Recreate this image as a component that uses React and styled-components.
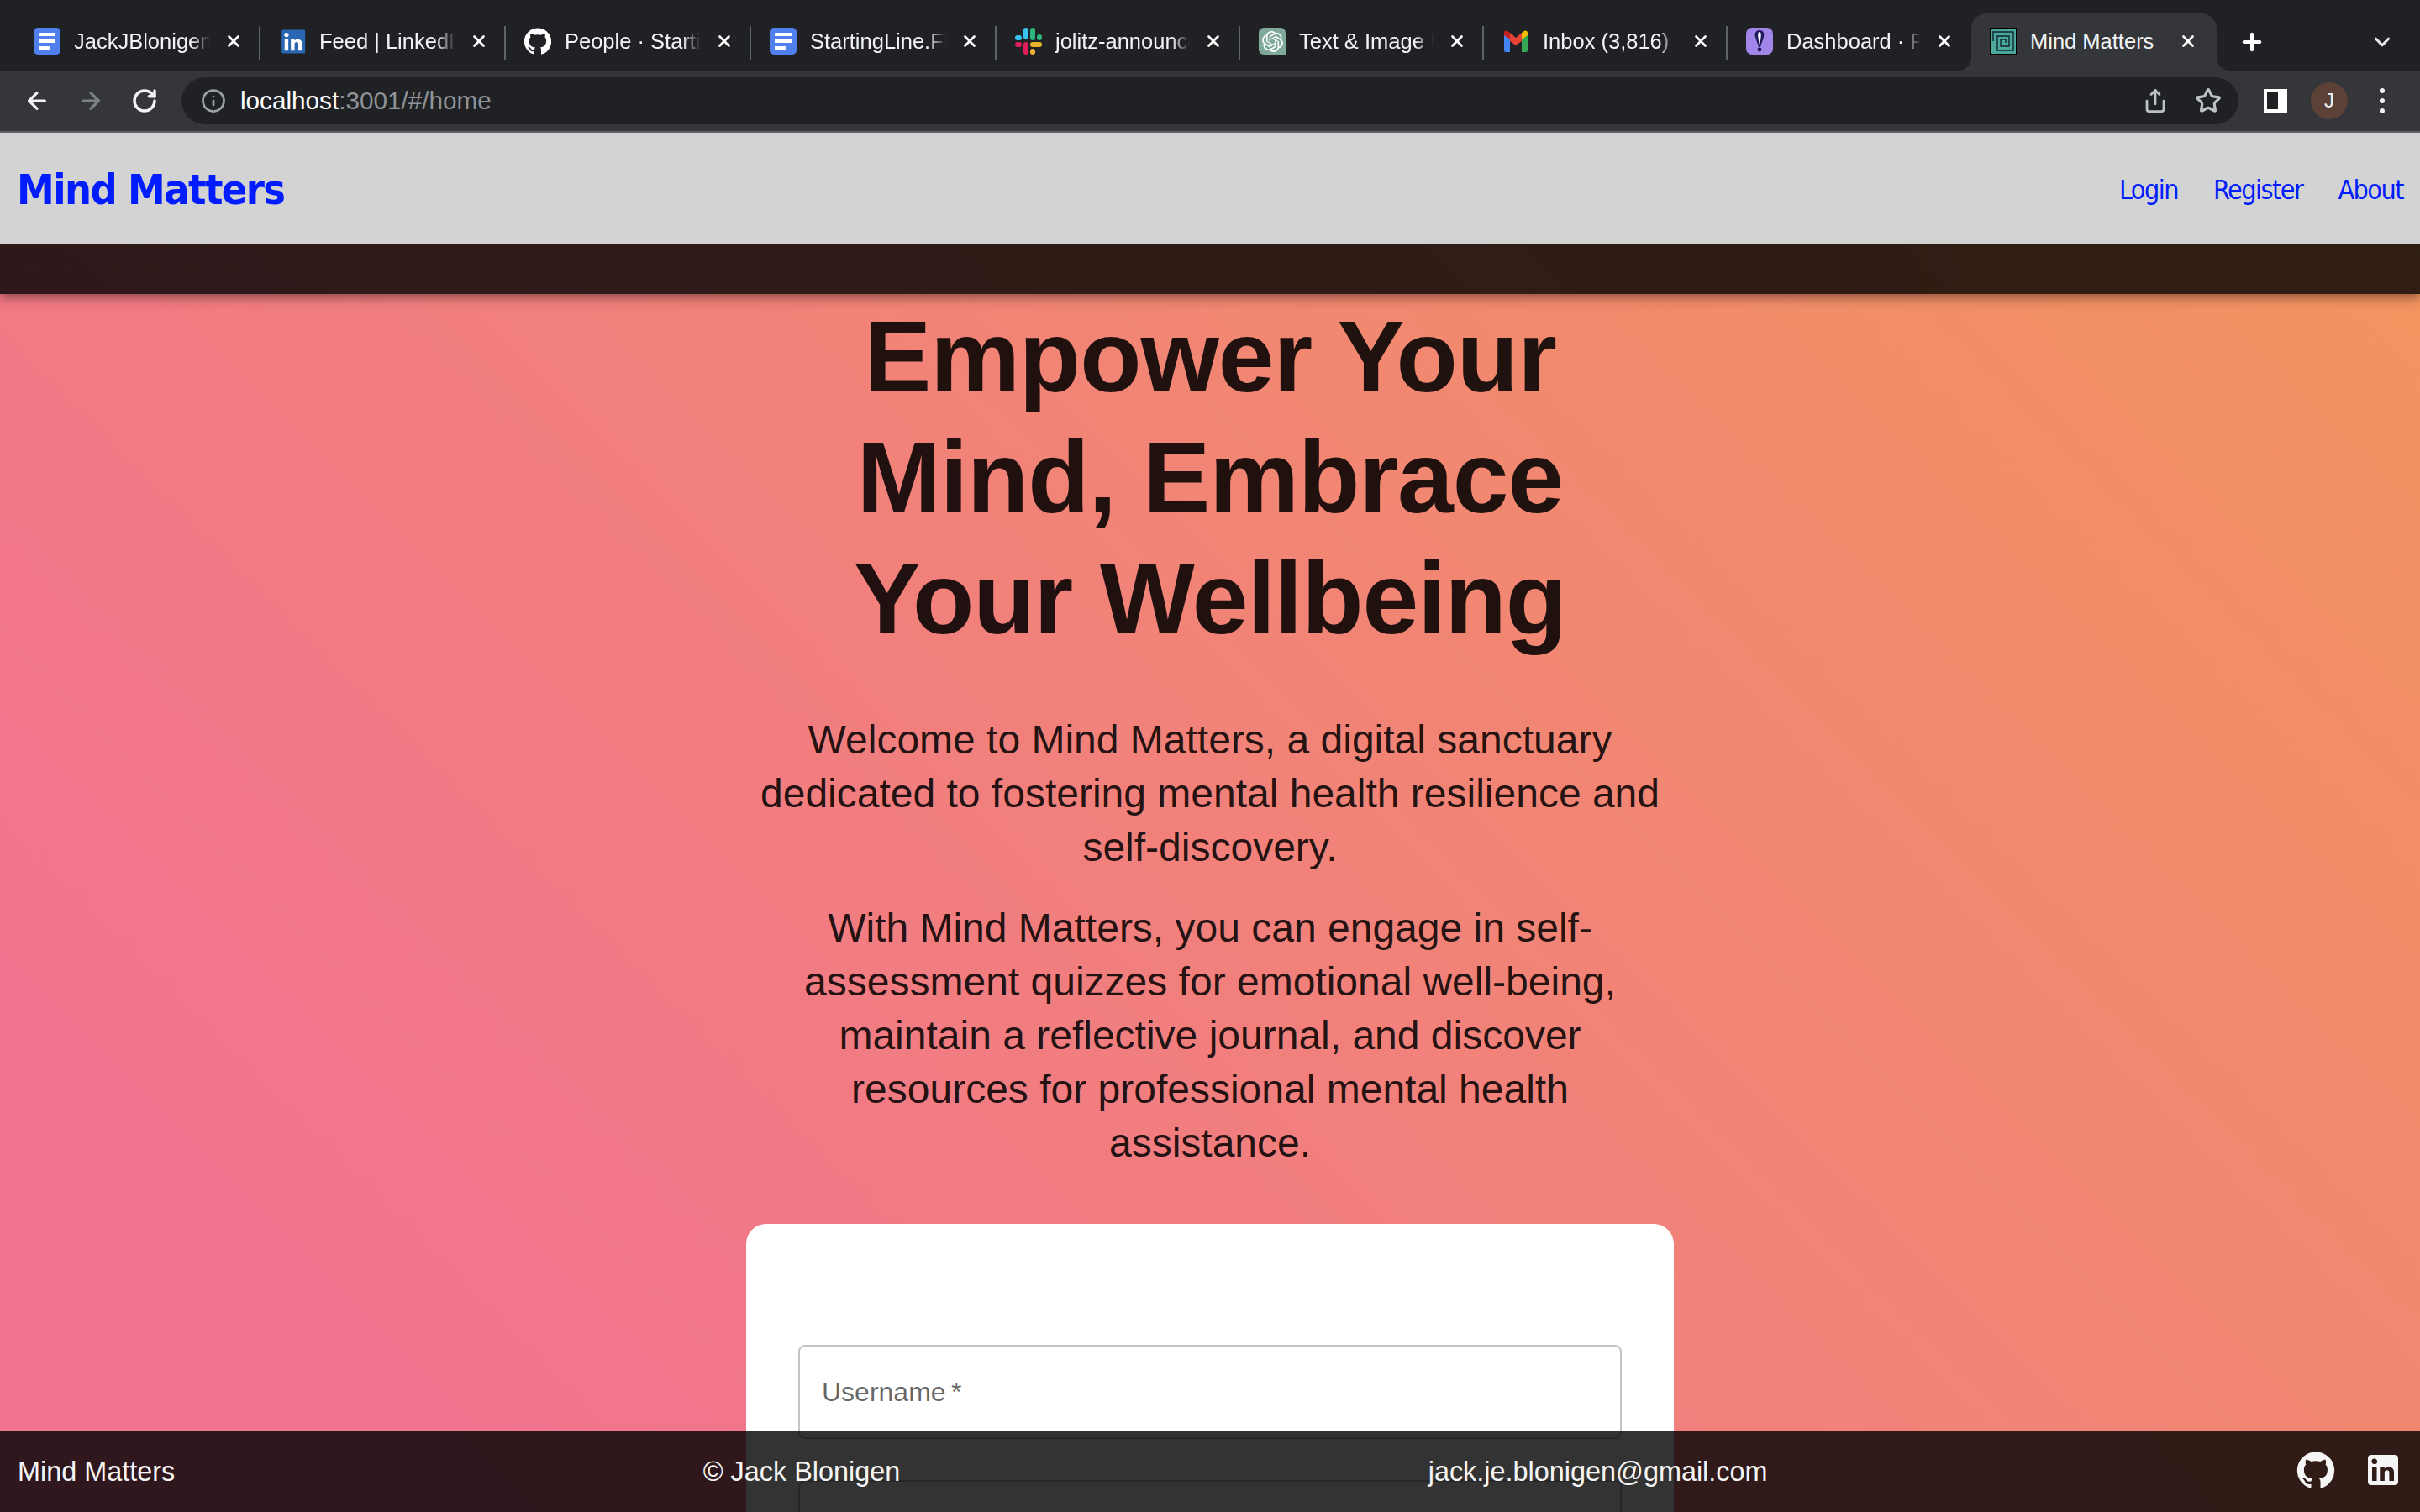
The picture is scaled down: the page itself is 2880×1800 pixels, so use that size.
import React from "react";
import styled, { createGlobalStyle } from "styled-components";
import { ArrowLeft, ArrowRight, RotateCw, Info, Share, Star, X, Plus, ChevronDown } from "lucide-react";
import { SiOpenai } from "react-icons/si";

const GITHUB_PATH =
  "M12 1.27a11 11 0 00-3.48 21.46c.55.09.73-.28.73-.55v-1.84c-3.03.64-3.67-1.46-3.67-1.46-.55-1.29-1.28-1.65-1.28-1.65-.92-.65.1-.65.1-.65 1.1 0 1.73 1.1 1.73 1.1.92 1.65 2.57 1.2 3.21.92a2 2 0 01.64-1.47c-2.47-.27-5.04-1.19-5.04-5.5 0-1.1.46-2.1 1.2-2.84a3.76 3.76 0 010-2.93s.91-.28 3.11 1.1c1.8-.49 3.7-.49 5.5 0 2.1-1.38 3.02-1.1 3.02-1.1a3.76 3.76 0 010 2.93c.83.74 1.2 1.74 1.2 2.94 0 4.21-2.57 5.13-5.04 5.4.45.37.82.92.82 2.02v3.03c0 .27.1.64.73.55A11 11 0 0012 1.27";
const LINKEDIN_IN =
  "M18.5 18.5v-5.3a3.26 3.26 0 0 0-3.26-3.26c-.85 0-1.84.52-2.32 1.3v-1.11h-2.79v8.37h2.79v-4.93c0-.77.62-1.4 1.39-1.4a1.4 1.4 0 0 1 1.4 1.4v4.93h2.79M6.88 8.56a1.68 1.68 0 0 0 1.68-1.68c0-.93-.75-1.69-1.68-1.69a1.69 1.69 0 0 0-1.69 1.69c0 .93.76 1.68 1.69 1.68m1.39 9.94v-8.37H5.5v8.37h2.77z";
const LINKEDIN_BOX =
  "M19 3a2 2 0 0 1 2 2v14a2 2 0 0 1-2 2H5a2 2 0 0 1-2-2V5a2 2 0 0 1 2-2h14m-.5 15.5v-5.3a3.26 3.26 0 0 0-3.26-3.26c-.85 0-1.84.52-2.32 1.3v-1.11h-2.79v8.37h2.79v-4.93c0-.77.62-1.4 1.39-1.4a1.4 1.4 0 0 1 1.4 1.4v4.93h2.79M6.88 8.56a1.68 1.68 0 0 0 1.68-1.68c0-.93-.75-1.69-1.68-1.69a1.69 1.69 0 0 0-1.69 1.69c0 .93.76 1.68 1.69 1.68m1.39 9.94v-8.37H5.5v8.37h2.77z";

const DocsIcon = () => (
  <svg width="32" height="32" viewBox="0 0 32 32">
    <rect width="32" height="32" rx="5" fill="#4f80ee" />
    <rect x="6" y="6" width="20" height="4" fill="#fff" />
    <rect x="6" y="14" width="20" height="4" fill="#fff" />
    <rect x="6" y="22" width="13" height="4" fill="#fff" />
  </svg>
);

const LinkedinIcon = () => (
  <svg width="32" height="32" viewBox="3 1 20 20">
    <rect x="5" y="2.5" width="17.5" height="17.5" fill="#2a67b2" rx="1" />
    <path d={LINKEDIN_IN} fill="#fff" transform="translate(1.7 -.5)" />
  </svg>
);

const OctocatIcon = () => (
  <svg width="32" height="32" viewBox="1 1 22 22">
    <path d={GITHUB_PATH} fill="#fff" />
  </svg>
);

const SlackIcon = () => (
  <svg width="32" height="32" viewBox="0 0 32 32">
    <rect x="10" y="0" width="6" height="14" rx="3" fill="#36c5f0" />
    <rect x="0" y="9" width="8" height="6" rx="3" fill="#36c5f0" />
    <rect x="18" y="0" width="6" height="15" rx="3" fill="#2eb67d" />
    <rect x="26" y="8" width="6" height="7" rx="3" fill="#2eb67d" />
    <rect x="10" y="17" width="6" height="15" rx="3" fill="#e01e5a" />
    <rect x="0" y="17" width="8" height="6" rx="3" fill="#e01e5a" />
    <rect x="18" y="17" width="14" height="6" rx="3" fill="#ecb22e" />
    <rect x="18" y="25" width="6" height="7" rx="3" fill="#ecb22e" />
  </svg>
);

const GptTile = styled.span`
  flex: none;
  display: flex;
  align-items: center;
  justify-content: center;
  width: 32px;
  height: 32px;
  border-radius: 6px 6px 0 6px;
  background: #7fa99b;
  color: #fff;
`;

const GmailIcon = () => (
  <svg width="32" height="32" viewBox="0 0 32 32">
    <path d="M2 7l7 5v17H4a2 2 0 0 1-2-2z" fill="#4285f4" />
    <path d="M30 7l-7 5v17h5a2 2 0 0 0 2-2z" fill="#34a853" />
    <path d="M9 6l7 6 7-6v10l-7 5-7-5z" fill="#ea4335" />
    <path d="M23 6l3-2a2.5 2.5 0 0 1 4 2v3l-7 5z" fill="#fbbc04" />
    <path d="M9 6L6 4a2.5 2.5 0 0 0-4 2v3l7 5z" fill="#c5221f" />
  </svg>
);

const FlyIcon = () => (
  <svg width="32" height="32" viewBox="0 0 32 32">
    <rect width="32" height="32" rx="7" fill="#a285e8" />
    <path d="M16 3c5 0 6 4 5 8-1 4-3 8-4 12h-2c-1-4-3-8-4-12-1-4 0-8 5-8z" fill="#1f1a5c" />
    <path d="M16 5c1.6 0 2 3 1.6 6-.3 3-1 7-1.6 10-.6-3-1.3-7-1.6-10-.4-3 0-6 1.6-6z" fill="#fff" />
    <circle cx="16" cy="26" r="2.4" fill="#1f1a5c" />
  </svg>
);

const MindIcon = () => (
  <svg width="32" height="32" viewBox="0 0 32 32">
    <rect width="32" height="32" fill="#000" />
    <rect x="1" y="1" width="30" height="30" fill="#4aa99b" />
    <path
      d="M4 16V5h24v22H9V10h14v12H13v-8h6v4"
      fill="none"
      stroke="#123"
      strokeWidth="1.4"
    />
  </svg>
);

const tabs = [
  { title: "JackJBlonigen Docs", icon: <DocsIcon />, width: 290, divider: true },
  { title: "Feed | LinkedIn", icon: <LinkedinIcon />, width: 290, divider: true },
  { title: "People · Starting", icon: <OctocatIcon />, width: 290, divider: true },
  { title: "StartingLine.FM", icon: <DocsIcon />, width: 290, divider: true },
  { title: "jolitz-announcements", icon: <SlackIcon />, width: 288, divider: true },
  {
    title: "Text & Image Uses",
    icon: (
      <GptTile>
        <SiOpenai size={25} />
      </GptTile>
    ),
    width: 288,
    divider: true,
  },
  { title: "Inbox (3,816) · jack", icon: <GmailIcon />, width: 288, divider: true },
  { title: "Dashboard · Fly", icon: <FlyIcon />, width: 288, divider: false },
];

const GlobalStyle = createGlobalStyle`
  html, body {
    margin: 0;
    padding: 0;
    height: 100%;
    overflow: hidden;
  }
  #root {
    height: 100%;
  }
`;

const Screen = styled.div`
  display: flex;
  flex-direction: column;
  width: 2880px;
  height: 1800px;
  font-family: "Liberation Sans", Arial, sans-serif;
`;

const TabStrip = styled.div`
  flex: none;
  display: flex;
  align-items: flex-end;
  height: 84px;
  padding-left: 18px;
  background: #202124;
`;

const Tab = styled.div`
  position: relative;
  flex: none;
  display: flex;
  align-items: center;
  gap: 16px;
  width: ${(p) => p.$width}px;
  height: 68px;
  padding: 0 ${(p) => (p.$active ? 22 : 18)}px 2px 22px;
  box-sizing: border-box;
  color: #f1f3f4;
  font-size: 25.5px;
  border-radius: 18px 18px 0 0;
  background: ${(p) => (p.$active ? "#35363a" : "transparent")};

  ${(p) =>
    p.$active &&
    `
    &::before, &::after {
      content: "";
      position: absolute;
      bottom: 0;
      width: 16px;
      height: 16px;
    }
    &::before {
      left: -16px;
      background: radial-gradient(circle at 0 0, transparent 16px, #35363a 16.5px);
    }
    &::after {
      right: -16px;
      background: radial-gradient(circle at 100% 0, transparent 16px, #35363a 16.5px);
    }
  `}
`;

const TabDivider = styled.div`
  flex: none;
  align-self: flex-start;
  width: 2px;
  height: 40px;
  margin-top: 31px;
  background: ${(p) => (p.$hidden ? "transparent" : "#5f6368")};
`;

const TabTitle = styled.span`
  flex: 1;
  min-width: 0;
  overflow: hidden;
  white-space: nowrap;
  -webkit-mask-image: ${(p) =>
    p.$active ? "none" : "linear-gradient(to right, #000 86%, transparent 100%)"};
`;

const TabClose = styled.span`
  flex: none;
  display: flex;
  justify-content: center;
  width: 24px;
  color: #fff;
`;

const NewTab = styled.span`
  flex: none;
  display: flex;
  margin: 0 0 18px 26px;
  color: #fff;
`;

const TabMenu = styled.span`
  flex: none;
  display: flex;
  margin: 0 30px 19px auto;
  color: #e8eaed;
`;

const Toolbar = styled.div`
  flex: none;
  display: flex;
  align-items: center;
  height: 72px;
  padding: 0 0 0 28px;
  background: #35363a;
  border-bottom: 2px solid #5f6368;
`;

const NavButton = styled.span`
  flex: none;
  display: flex;
  width: 32px;
  margin-right: 32px;
  color: ${(p) => (p.$disabled ? "#7d8085" : "#f1f3f4")};
`;

const Omnibox = styled.div`
  flex: none;
  display: flex;
  align-items: center;
  gap: 17px;
  width: 2448px;
  height: 56px;
  margin-left: -4px;
  padding: 0 20px 0 23px;
  box-sizing: border-box;
  border-radius: 28px;
  background: #202124;
  color: #9aa0a6;
`;

const Url = styled.span`
  flex: 1;
  font-size: 29.7px;
  color: #8f9398;

  b {
    font-weight: 400;
    color: #fff;
  }
`;

const OmniAction = styled.span`
  display: flex;
  margin-left: 15px;
  color: #bdc1c6;
`;

const SidePanel = styled.span`
  flex: none;
  display: flex;
  justify-content: flex-end;
  width: 28px;
  height: 28px;
  margin-left: 30px;
  box-sizing: border-box;
  border: 4px solid #fff;
  border-right-width: 3px;
  background: #202124;

  &::after {
    content: "";
    width: 8px;
    background: #fff;
  }
`;

const Avatar = styled.span`
  flex: none;
  display: flex;
  align-items: center;
  justify-content: center;
  width: 44px;
  height: 44px;
  margin-left: 28px;
  border-radius: 50%;
  background: #5c4137;
  color: #f1f3f4;
  font-size: 24px;
`;

const Kebab = styled.span`
  flex: none;
  display: flex;
  flex-direction: column;
  gap: 6px;
  margin-left: 38px;

  i {
    width: 6px;
    height: 6px;
    border-radius: 50%;
    background: #f1f3f4;
  }
`;

const Viewport = styled.div`
  position: relative;
  flex: 1;
  min-height: 0;
  overflow: hidden;
  background: linear-gradient(45deg, #f1738f 14%, #f2955d 100%);
`;

const Header = styled.header`
  position: relative;
  z-index: 2;
  box-shadow: 0 4px 8px -2px rgba(0, 0, 0, 0.2), 0 8px 10px rgba(0, 0, 0, 0.14),
    0 2px 20px rgba(0, 0, 0, 0.12);
`;

const Navbar = styled.nav`
  display: flex;
  align-items: center;
  justify-content: space-between;
  height: 132px;
  padding: 0 20px;
  background: #d3d3d3;
  font-family: "DejaVu Sans Condensed", "DejaVu Sans", sans-serif;
  color: #001cff;
`;

const Brand = styled.a`
  margin-top: 3px;
  font-size: 50px;
  font-weight: 700;
  letter-spacing: -1.6px;
`;

const NavLinks = styled.div`
  display: flex;
  gap: 42px;
  margin-top: 3px;
  font-size: 32px;
  letter-spacing: -1.5px;
`;

const HeaderBand = styled.div`
  height: 60px;
  background: rgba(0, 0, 0, 0.8);
`;

const Hero = styled.main`
  display: flex;
  flex-direction: column;
  align-items: center;
  width: 1104px;
  margin: 0 auto;
  padding-top: 2px;
  text-align: center;
`;

const Title = styled.h1`
  margin: 0 0 65px;
  font-size: 120px;
  font-weight: 700;
  line-height: 1.2;
  letter-spacing: -0.00833em;
  color: rgba(0, 0, 0, 0.87);
`;

const Lead = styled.p`
  margin: 0 0 32px;
  font-size: 48px;
  line-height: 64px;
  color: rgba(0, 0, 0, 0.87);
`;

const Card = styled.form`
  display: flex;
  flex-direction: column;
  gap: 49px;
  width: 100%;
  margin-top: 32px;
  padding: 144px 62px 64px;
  box-sizing: border-box;
  border-radius: 24px;
  background: #fff;
`;

const Field = styled.div`
  display: flex;
  align-items: center;
  height: 112px;
  padding-left: 26px;
  box-sizing: border-box;
  border: 2px solid #c4c4c4;
  border-radius: 8px;
  font-size: 32px;
  color: rgba(0, 0, 0, 0.6);
`;

const Footer = styled.footer`
  position: absolute;
  left: 0;
  right: 0;
  bottom: 0;
  z-index: 3;
  display: flex;
  align-items: center;
  justify-content: space-between;
  height: 96px;
  padding: 0 20px 0 21px;
  box-sizing: border-box;
  background: rgba(0, 0, 0, 0.8);
  color: #f5f5f5;
  font-size: 32.4px;
`;

const Socials = styled.div`
  display: flex;
  gap: 32px;
  margin-top: -4px;
  color: #f5f5f5;
`;

const App = () => {
  return (
    <Screen>
      <GlobalStyle />
      <TabStrip>
        {tabs.map((tab) => (
          <React.Fragment key={tab.title}>
            <Tab $width={tab.width}>
              {tab.icon}
              <TabTitle>{tab.title}</TabTitle>
              <TabClose>
                <X size={22} strokeWidth={3} />
              </TabClose>
            </Tab>
            <TabDivider $hidden={!tab.divider} />
          </React.Fragment>
        ))}
        <Tab $active $width={292}>
          <MindIcon />
          <TabTitle $active>Mind Matters</TabTitle>
          <TabClose>
            <X size={22} strokeWidth={3} />
          </TabClose>
        </Tab>
        <NewTab>
          <Plus size={32} strokeWidth={3} />
        </NewTab>
        <TabMenu>
          <ChevronDown size={30} strokeWidth={2.5} />
        </TabMenu>
      </TabStrip>

      <Toolbar>
        <NavButton>
          <ArrowLeft size={32} strokeWidth={2.4} />
        </NavButton>
        <NavButton $disabled>
          <ArrowRight size={32} strokeWidth={2.4} />
        </NavButton>
        <NavButton>
          <RotateCw size={32} strokeWidth={2.6} />
        </NavButton>
        <Omnibox>
          <Info size={30} strokeWidth={2.2} />
          <Url>
            <b>localhost</b>:3001/#/home
          </Url>
          <OmniAction>
            <Share size={30} strokeWidth={2.2} />
          </OmniAction>
          <OmniAction>
            <Star size={32} strokeWidth={2.4} />
          </OmniAction>
        </Omnibox>
        <SidePanel />
        <Avatar>J</Avatar>
        <Kebab>
          <i />
          <i />
          <i />
        </Kebab>
      </Toolbar>

      <Viewport>
        <Header>
          <Navbar>
            <Brand>Mind Matters</Brand>
            <NavLinks>
              <a>Login</a>
              <a>Register</a>
              <a>About</a>
            </NavLinks>
          </Navbar>
          <HeaderBand />
        </Header>

        <Hero>
          <Title>
            Empower Your
            <br />
            Mind, Embrace
            <br />
            Your Wellbeing
          </Title>
          <Lead>
            Welcome to Mind Matters, a digital sanctuary dedicated to fostering mental health
            resilience and self-discovery.
          </Lead>
          <Lead>
            With Mind Matters, you can engage in self-assessment quizzes for emotional well-being,
            maintain a reflective journal, and discover resources for professional mental health
            assistance.
          </Lead>
          <Card>
            <Field>Username{"\u2009"}*</Field>
            <Field>Password{"\u2009"}*</Field>
          </Card>
        </Hero>

        <Footer>
          <span>Mind Matters</span>
          <span>© Jack Blonigen</span>
          <span>jack.je.blonigen@gmail.com</span>
          <Socials>
            <svg width="48" height="48" viewBox="0 0 24 24" fill="currentColor">
              <path d={GITHUB_PATH} />
            </svg>
            <svg width="48" height="48" viewBox="0 0 24 24" fill="currentColor">
              <path d={LINKEDIN_BOX} />
            </svg>
          </Socials>
        </Footer>
      </Viewport>
    </Screen>
  );
};

export default App;
